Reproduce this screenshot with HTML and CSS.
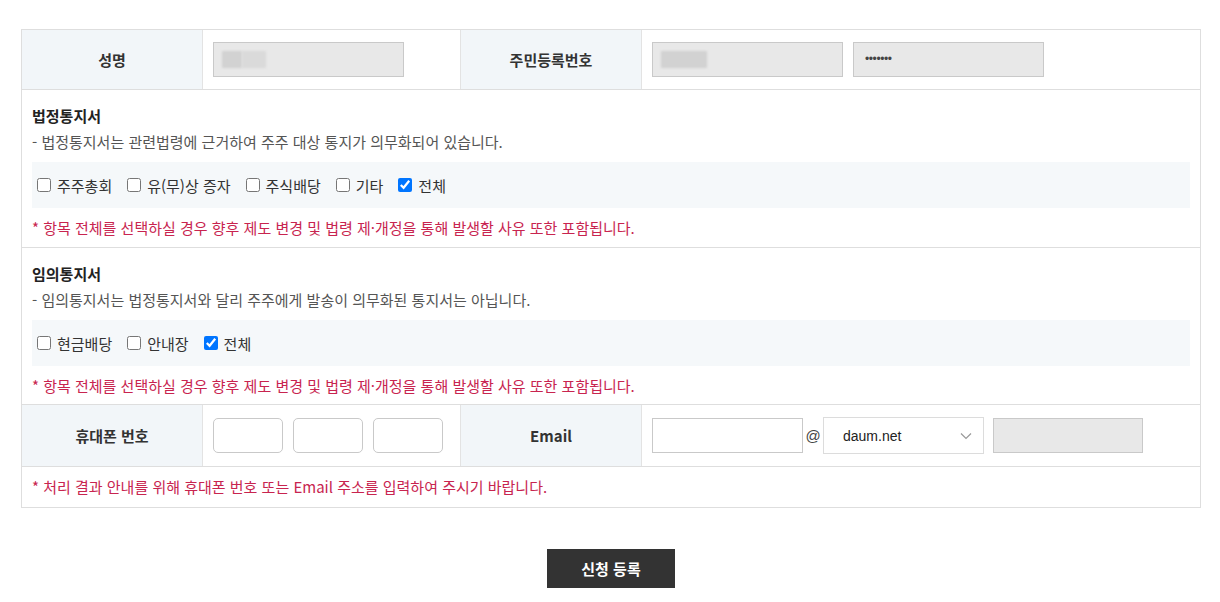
FILE: index.html
```html
<!DOCTYPE html>
<html lang="ko">
<head>
<meta charset="utf-8">
<title>신청 등록</title>
<link rel="stylesheet" href="styles.css">
</head>
<body>
<div class="form-table">
  <div class="grid-row">
    <div class="th">성명</div>
    <div class="td">
      <div class="fake-input name"><span class="blur b1"></span><span class="blur b2"></span></div>
    </div>
    <div class="th">주민등록번호</div>
    <div class="td">
      <div class="fake-input ssn"><span class="blur b3"></span></div>
      <div class="fake-input ssn dots">•••••••</div>
    </div>
  </div>

  <div class="section">
    <div class="sec-title">법정통지서</div>
    <div class="sec-desc">- 법정통지서는 관련법령에 근거하여 주주 대상 통지가 의무화되어 있습니다.</div>
    <div class="check-box">
      <label class="chk"><input type="checkbox">주주총회</label>
      <label class="chk"><input type="checkbox">유(무)상 증자</label>
      <label class="chk"><input type="checkbox">주식배당</label>
      <label class="chk"><input type="checkbox">기타</label>
      <label class="chk"><input type="checkbox" checked>전체</label>
    </div>
    <div class="note">* 항목 전체를 선택하실 경우 향후 제도 변경 및 법령 제·개정을 통해 발생할 사유 또한 포함됩니다.</div>
  </div>

  <div class="section">
    <div class="sec-title">임의통지서</div>
    <div class="sec-desc">- 임의통지서는 법정통지서와 달리 주주에게 발송이 의무화된 통지서는 아닙니다.</div>
    <div class="check-box">
      <label class="chk"><input type="checkbox">현금배당</label>
      <label class="chk"><input type="checkbox">안내장</label>
      <label class="chk"><input type="checkbox" checked>전체</label>
    </div>
    <div class="note">* 항목 전체를 선택하실 경우 향후 제도 변경 및 법령 제·개정을 통해 발생할 사유 또한 포함됩니다.</div>
  </div>

  <div class="grid-row row-contact">
    <div class="th">휴대폰 번호</div>
    <div class="td phone">
      <input class="ph" type="text">
      <input class="ph" type="text">
      <input class="ph" type="text">
    </div>
    <div class="th">Email</div>
    <div class="td email">
      <input class="em-id" type="text">
      <span class="at">@</span>
      <div class="sel-wrap">
        <select class="sel"><option>daum.net</option></select>
        <svg class="chev" width="12" height="8" viewBox="0 0 12 8"><path d="M1 1.5 L6 6.5 L11 1.5" fill="none" stroke="#999" stroke-width="1.2"/></svg>
      </div>
      <div class="fake-input em-dom"></div>
    </div>
  </div>

  <div class="last-note">
    <div class="note">* 처리 결과 안내를 위해 휴대폰 번호 또는 Email 주소를 입력하여 주시기 바랍니다.</div>
  </div>
</div>

<div class="btn-area">
  <button class="btn" type="button">신청 등록</button>
</div>
</body>
</html>
```

FILE: styles.css
```css
* { box-sizing: border-box; }
body {
  margin: 0;
  padding: 29px 20px 0 21px;
  font-family: "Noto Sans CJK KR", "Noto Sans", sans-serif;
  color: #333;
  background: #fff;
}
.form-table {
  width: 1180px;
  border: 1px solid #dedede;
}
.grid-row {
  display: grid;
  grid-template-columns: 180px 258px 181px 1fr;
  height: 60px;
  border-bottom: 1px solid #dedede;
}
.th {
  background: #f2f6f9;
  display: flex;
  align-items: center;
  justify-content: center;
  font-weight: 700;
  font-size: 15px;
  color: #333;
}
.grid-row > div + div { border-left: 1px solid #e3e3e3; }
.td {
  display: flex;
  align-items: center;
  padding-left: 10px;
  gap: 10px;
}
.fake-input {
  width: 191px;
  height: 35px;
  background: #e8e8e8;
  border: 1px solid #c9c9c9;
  position: relative;
}
.ssn { width: 191px; }
.blur {
  position: absolute;
  background: #d2d2d2;
  filter: blur(1px);
}
.b1 { left: 8px; top: 8px; width: 20px; height: 17px; }
.b2 { left: 28px; top: 8px; width: 24px; height: 17px; background: #dadada; }
.b3 { left: 8px; top: 8px; width: 46px; height: 17px; }
.dots {
  font-family: "Liberation Sans", sans-serif;
  font-size: 12px;
  color: #444;
  line-height: 33px;
  padding-left: 11px;
  letter-spacing: -0.4px;
}
.section {
  padding: 13px 10px 6px 10px;
  border-bottom: 1px solid #dedede;
}
.section + .section { padding-bottom: 5px; }
.sec-title {
  font-size: 15px;
  font-weight: 700;
  line-height: 26px;
  color: #222;
}
.sec-desc {
  font-size: 15px;
  line-height: 26px;
  color: #555;
}
.check-box {
  margin-top: 7px;
  height: 46px;
  background: #f5f8fa;
  display: flex;
  align-items: center;
}
.chk {
  display: flex;
  align-items: center;
  font-size: 15px;
  color: #333;
  margin-right: 10px;
}
.chk input {
  width: 14px;
  height: 14px;
  margin: 0 6px 0 5px;
}
.note {
  margin-top: 7px;
  font-size: 15px;
  line-height: 26px;
  color: #c8244f;
}
.row-contact { height: 62px; }
.ph {
  width: 70px;
  height: 35px;
  border: 1px solid #c9c9c9;
  border-radius: 5px;
  background: #fff;
  margin: 0;
}
.email { gap: 0; }
.em-id {
  width: 151px;
  height: 35px;
  border: 1px solid #c9c9c9;
  margin: 0;
}
.at {
  font-family: "Liberation Sans", sans-serif;
  font-size: 15px;
  color: #444;
  width: 20px;
  text-align: center;
}
.sel-wrap {
  position: relative;
  width: 161px;
  height: 37px;
}
.sel {
  width: 100%;
  height: 100%;
  appearance: none;
  -webkit-appearance: none;
  border: 1px solid #dcdcdc;
  background: #fff;
  padding-left: 19px;
  font-family: "Liberation Sans", sans-serif;
  font-size: 14px;
  color: #222;
  border-radius: 0;
  margin: 0;
}
.chev {
  position: absolute;
  right: 12px;
  top: 15px;
  pointer-events: none;
}
.em-dom {
  width: 150px;
  height: 35px;
  margin-left: 9px;
}
.last-note {
  padding: 0 10px;
  height: 40px;
  display: flex;
  align-items: center;
}
.last-note .note { margin-top: 0; }
.btn-area {
  width: 1180px;
  display: flex;
  justify-content: center;
  margin-top: 41px;
}
.btn {
  width: 128px;
  height: 39px;
  background: #333;
  color: #fff;
  border: none;
  font-family: "Noto Sans CJK KR", sans-serif;
  font-size: 15px;
  font-weight: 700;
}
```
